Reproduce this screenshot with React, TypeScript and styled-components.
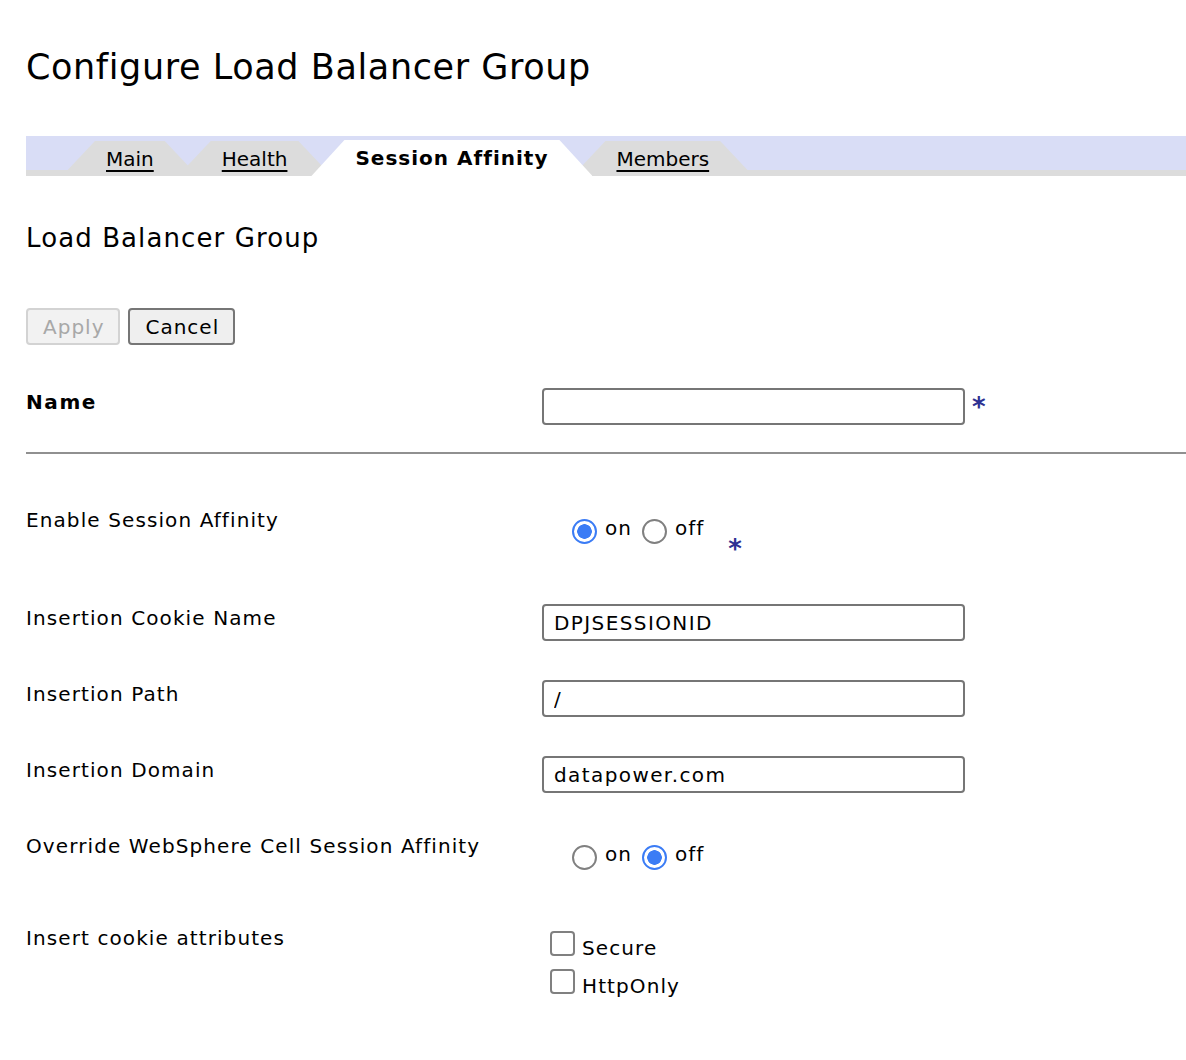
import React from "react";
import styled, { createGlobalStyle } from "styled-components";

const GlobalStyle = createGlobalStyle`
  html, body { margin: 0; padding: 0; background: #ffffff; }
  body { font-family: "DejaVu Sans", Verdana, sans-serif; color: #000; }
`;

const Page = styled.div`
  padding: 0 0 40px 26px;
  width: 1160px;
`;

const Title = styled.h1`
  margin: 47px 0 0 0;
  font-size: 35px;
  line-height: 40px;
  font-weight: normal;
  letter-spacing: 0.6px;
`;

const TabBar = styled.nav`
  margin-top: 49px;
  height: 40px;
  display: flex;
  align-items: flex-end;
  background: linear-gradient(to bottom, #d9ddf6 0 34px, #dcdcdc 34px 40px);
`;

const Tab = styled.a<{ $active?: boolean }>`
  position: relative;
  z-index: ${(p) => (p.$active ? 2 : 1)};
  height: ${(p) => (p.$active ? 36 : 35)}px;
  display: flex;
  align-items: center;
  padding: 0 44px;
  margin-left: -20px;
  background: ${(p) => (p.$active ? "#ffffff" : "#dcdcdc")};
  clip-path: polygon(33px 0, calc(100% - 33px) 0, 100% 100%, 0 100%);
  font-family: "DejaVu Sans", Verdana, sans-serif;
  font-size: 20px;
  font-weight: ${(p) => (p.$active ? "bold" : "normal")};
  letter-spacing: ${(p) => (p.$active ? "1px" : "0")};
  color: #000;
  text-decoration: ${(p) => (p.$active ? "none" : "underline")};
  text-decoration-thickness: 2px;
  text-underline-offset: 4px;
  cursor: pointer;
  &:first-child { margin-left: 36px; }
`;

const SubTitle = styled.h2`
  margin: 47px 0 0 0;
  font-size: 26px;
  line-height: 30px;
  font-weight: normal;
  letter-spacing: 1.1px;
`;

const ButtonRow = styled.div`
  margin-top: 55px;
  display: flex;
  gap: 8px;
`;

const Button = styled.button<{ $disabled?: boolean }>`
  height: 37px;
  box-sizing: border-box;
  padding: 0 14px 0 15px;
  font-family: "DejaVu Sans", Verdana, sans-serif;
  font-size: 20px;
  letter-spacing: 1px;
  border-radius: 4px;
  border: 2px solid ${(p) => (p.$disabled ? "#d3d3d3" : "#767676")};
  background: ${(p) => (p.$disabled ? "#f2f2f2" : "#efefef")};
  color: ${(p) => (p.$disabled ? "#a8a8a8" : "#000")};
`;

const Row = styled.div<{ $top: number; $height: number }>`
  margin-top: ${(p) => p.$top}px;
  min-height: ${(p) => p.$height}px;
  display: grid;
  grid-template-columns: 516px 1fr;
  align-items: start;
`;

const Label = styled.div<{ $bold?: boolean }>`
  padding-top: 2px;
  font-size: 20px;
  line-height: 24px;
  font-weight: ${(p) => (p.$bold ? "bold" : "normal")};
  letter-spacing: ${(p) => (p.$bold ? "1.6px" : "1.1px")};
`;

const Control = styled.div`
  display: flex;
  align-items: flex-start;
`;

const TextInput = styled.input`
  width: 423px;
  height: 37px;
  box-sizing: border-box;
  border: 2px solid #767676;
  border-radius: 4px;
  padding: 0 10px;
  font-family: "DejaVu Sans", Verdana, sans-serif;
  font-size: 20px;
  letter-spacing: 1.4px;
  color: #000;
  background: #fff;
  outline: none;
`;

const Required = styled.span<{ $left: number; $top: number }>`
  margin-left: ${(p) => p.$left}px;
  margin-top: ${(p) => p.$top}px;
  color: #2e3192;
  font-size: 26px;
  font-weight: bold;
  line-height: 20px;
  font-family: "DejaVu Sans", sans-serif;
`;

const RadioGroup = styled.div<{ $top: number }>`
  margin-left: 30px;
  margin-top: ${(p) => p.$top}px;
  display: flex;
  align-items: flex-start;
`;

const RadioOption = styled.label`
  display: flex;
  align-items: center;
  gap: 8px;
  margin-right: 10px;
  font-size: 20px;
  line-height: 24px;
  letter-spacing: 1px;
`;

const OptionText = styled.span`
  position: relative;
  top: -4px;
`;

const Radio = styled.input.attrs({ type: "radio" })`
  appearance: none;
  margin: 0;
  width: 25px;
  height: 25px;
  box-sizing: border-box;
  border-radius: 50%;
  border: 2px solid #808080;
  background: #fff;
  &:checked {
    border: 2px solid #3b7cf5;
    background: radial-gradient(circle, #3b7cf5 0 7px, #ffffff 7.5px);
  }
`;

const CheckList = styled.div`
  margin-left: 8px;
  margin-top: 7px;
  display: flex;
  flex-direction: column;
  gap: 13px;
`;

const CheckOption = styled.label`
  display: flex;
  align-items: flex-start;
  gap: 7px;
  font-size: 20px;
  line-height: 24px;
  letter-spacing: 1.1px;
`;

const CheckText = styled.span`
  position: relative;
  top: 5px;
`;

const Checkbox = styled.input.attrs({ type: "checkbox" })`
  appearance: none;
  margin: 0;
  width: 25px;
  height: 25px;
  box-sizing: border-box;
  border: 2px solid #808080;
  border-radius: 4px;
  background: #fff;
`;

const Divider = styled.hr`
  margin: 27px 0 0 0;
  border: none;
  height: 2px;
  background: #909090;
`;

export default function App() {
  return (
    <>
      <GlobalStyle />
      <Page>
        <Title>Configure Load Balancer Group</Title>
        <TabBar>
          <Tab>Main</Tab>
          <Tab>Health</Tab>
          <Tab $active>Session Affinity</Tab>
          <Tab>Members</Tab>
        </TabBar>
        <SubTitle>Load Balancer Group</SubTitle>
        <ButtonRow>
          <Button $disabled disabled>Apply</Button>
          <Button>Cancel</Button>
        </ButtonRow>

        <Row $top={43} $height={37}>
          <Label $bold>Name</Label>
          <Control>
            <TextInput defaultValue="" />
            <Required $left={7} $top={9}>*</Required>
          </Control>
        </Row>

        <Divider />

        <Row $top={52} $height={98}>
          <Label>Enable Session Affinity</Label>
          <RadioGroup $top={13}>
            <RadioOption>
              <Radio name="esa" defaultChecked />
              <OptionText>on</OptionText>
            </RadioOption>
            <RadioOption>
              <Radio name="esa" />
              <OptionText>off</OptionText>
            </RadioOption>
            <Required $left={14} $top={20}>*</Required>
          </RadioGroup>
        </Row>

        <Row $top={0} $height={76}>
          <Label>Insertion Cookie Name</Label>
          <Control>
            <TextInput defaultValue="DPJSESSIONID" />
          </Control>
        </Row>

        <Row $top={0} $height={76}>
          <Label>Insertion Path</Label>
          <Control>
            <TextInput defaultValue="/" />
          </Control>
        </Row>

        <Row $top={0} $height={76}>
          <Label>Insertion Domain</Label>
          <Control>
            <TextInput defaultValue="datapower.com" />
          </Control>
        </Row>

        <Row $top={0} $height={92}>
          <Label>Override WebSphere Cell Session Affinity</Label>
          <RadioGroup $top={13}>
            <RadioOption>
              <Radio name="ows" />
              <OptionText>on</OptionText>
            </RadioOption>
            <RadioOption>
              <Radio name="ows" defaultChecked />
              <OptionText>off</OptionText>
            </RadioOption>
          </RadioGroup>
        </Row>

        <Row $top={0} $height={80}>
          <Label>Insert cookie attributes</Label>
          <CheckList>
            <CheckOption>
              <Checkbox />
              <CheckText>Secure</CheckText>
            </CheckOption>
            <CheckOption>
              <Checkbox />
              <CheckText>HttpOnly</CheckText>
            </CheckOption>
          </CheckList>
        </Row>
      </Page>
    </>
  );
}
